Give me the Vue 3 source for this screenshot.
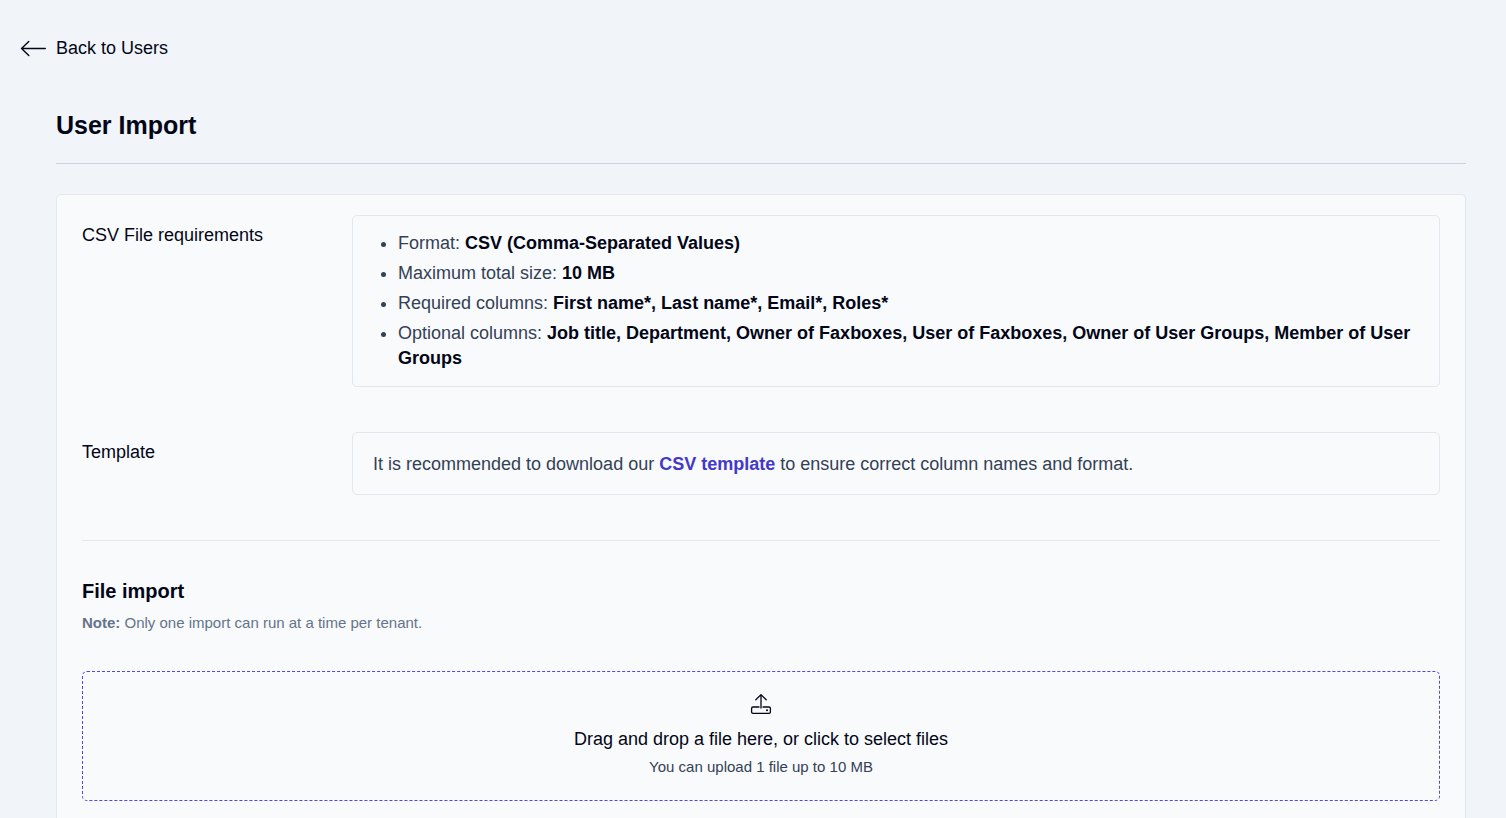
<script setup>
const requirements = [
  { label: 'Format:', value: 'CSV (Comma-Separated Values)' },
  { label: 'Maximum total size:', value: '10 MB' },
  { label: 'Required columns:', value: 'First name*, Last name*, Email*, Roles*' },
  {
    label: 'Optional columns:',
    value: 'Job title, Department, Owner of Faxboxes, User of Faxboxes, Owner of User Groups, Member of User Groups',
  },
]
</script>

<template>
  <main class="page">
    <a class="back" href="#users">
      <svg class="back-icon" width="26" height="17" viewBox="0 0 26 17" fill="none" aria-hidden="true">
        <path d="M25.3 8.5H1.5M8.8 1.4L1.5 8.5l7.3 7.1" stroke="currentColor" stroke-width="1.4" stroke-linecap="round" stroke-linejoin="round" />
      </svg>
      Back to Users
    </a>

    <div class="content">
      <h1 class="title">User Import</h1>

      <div class="card">
        <section class="row">
          <h2 class="row-label">CSV File requirements</h2>
          <div class="panel list-panel">
            <ul class="requirements">
              <li v-for="item in requirements" :key="item.label">
                {{ item.label }} <strong>{{ item.value }}</strong>
              </li>
            </ul>
          </div>
        </section>

        <section class="row">
          <h2 class="row-label">Template</h2>
          <p class="panel text-panel">
            It is recommended to download our <a class="link" href="#template">CSV template</a> to ensure correct column names and format.
          </p>
        </section>

        <section class="import">
          <h2 class="import-title">File import</h2>
          <p class="note"><strong>Note:</strong> Only one import can run at a time per tenant.</p>
          <button class="dropzone" type="button">
            <svg width="22" height="22" viewBox="0 0 22 22" fill="none" stroke="currentColor" stroke-width="1.3" stroke-linecap="round" stroke-linejoin="round" aria-hidden="true">
              <path d="M9 14H3Q1.6 14 1.6 15.4V18.9Q1.6 20.3 3 20.3H19Q20.4 20.3 20.4 18.9V15.4Q20.4 14 19 14H13" />
              <path d="M11 15V1.8M5.8 6.8L11 1.6L16.2 6.8" />
              <circle cx="17" cy="17.2" r="1" fill="currentColor" stroke="none" />
            </svg>
            <span class="drop-title">Drag and drop a file here, or click to select files</span>
            <span class="drop-hint">You can upload 1 file up to 10 MB</span>
          </button>
        </section>
      </div>
    </div>
  </main>
</template>

<style>
body {
  margin: 0;
  background: #f1f5f9;
}
</style>

<style scoped>
.page {
  box-sizing: border-box;
  display: flex;
  flex-direction: column;
  min-height: 100vh;
  padding: 36px 40px 0 20px;
  background: #f1f5f9;
  color: #020617;
  font: 18px/25px "Liberation Sans", Arial, sans-serif;
}

.back {
  display: flex;
  align-self: flex-start;
  align-items: center;
  gap: 10px;
  color: inherit;
  text-decoration: none;
}

.back-icon {
  display: block;
}

.content {
  display: flex;
  flex: 1;
  flex-direction: column;
  margin-left: 36px;
}

.title {
  margin: 49px 0 30px;
  padding-bottom: 23px;
  border-bottom: 1px solid #cbd5e1;
  font-size: 25px;
  line-height: 30px;
}

.card {
  flex: 1;
  padding: 20px 25px 16px;
  border: 1px solid #e2e8f0;
  border-bottom: 0;
  border-radius: 5px 5px 0 0;
  background: #f9fafc;
}

.row {
  display: grid;
  grid-template-columns: 270px 1fr;
  margin-bottom: 45px;
}

.row-label {
  margin: 8px 0 0;
  font-size: 18px;
  font-weight: 400;
}

.panel {
  margin: 0;
  border: 1px solid #e2e8f0;
  border-radius: 5px;
  color: #334155;
}

.list-panel {
  padding: 15px 20px;
}

.text-panel {
  padding: 19px 20px 17px;
}

.requirements {
  display: grid;
  gap: 5px;
  margin: 0;
  padding-left: 25px;
}

.requirements strong {
  color: #020617;
}

.link {
  color: #4338ca;
  font-weight: 700;
  text-decoration: none;
}

.import {
  padding-top: 35px;
  border-top: 1px solid #e2e8f0;
}

.import-title {
  margin: 0;
  font-size: 20px;
  line-height: 30px;
}

.note {
  margin: 7px 0 38px;
  color: #64748b;
  font-size: 15px;
  line-height: 20px;
}

.dropzone {
  display: flex;
  flex-direction: column;
  align-items: center;
  width: 100%;
  padding: 21px 20px 23px;
  border: 1px dashed #4f46e5;
  border-radius: 5px;
  background: transparent;
  color: #020617;
  font: inherit;
  cursor: pointer;
}

.drop-title {
  margin: 12px 0 5px;
}

.drop-hint {
  color: #334155;
  font-size: 15px;
  line-height: 20px;
}
</style>
